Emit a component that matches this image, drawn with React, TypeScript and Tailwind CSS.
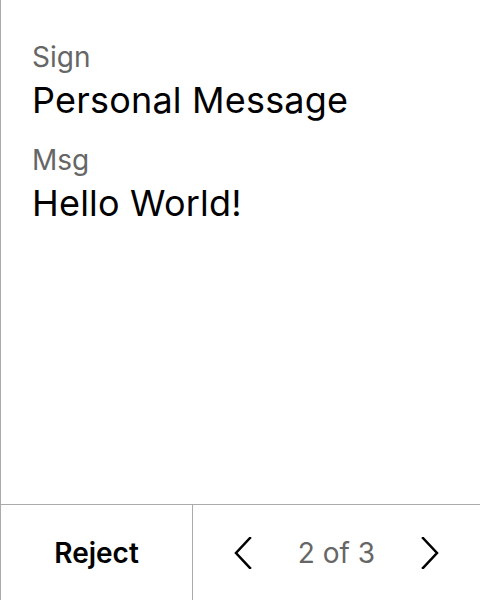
const Field = ({ label, value }: { label: string; value: string }) => (
  <div className="flex flex-col gap-[4px]">
    <span className="text-[28px] leading-[34px] text-[#666666]">{label}</span>
    <span className="text-[36px] leading-[44px] tracking-[0.2px] text-black">{value}</span>
  </div>
);

const App = () => {
  return (
    <section
      className="w-[480px] h-[600px] flex flex-col bg-white border-l border-[#aaaaaa]"
      style={{ fontFamily: 'Inter, "Noto Sans", sans-serif' }}
    >
      <div className="flex-grow flex flex-col gap-[21px] pt-[40px] pl-[31px]">
        <Field label="Sign" value="Personal Message" />
        <Field label="Msg" value="Hello World!" />
      </div>
      <footer className="h-[96px] flex border-t border-[#aaaaaa]">
        <button className="w-[192px] flex items-center justify-center border-r border-[#aaaaaa] text-[28px] font-semibold text-black">
          Reject
        </button>
        <div className="flex-grow flex items-center justify-between px-[34px]">
          <svg width="32" height="32" viewBox="0 0 32 32" fill="none" stroke="black" strokeWidth="2.5" strokeLinecap="square">
            <path d="M23 1 L9 16 L23 31" />
          </svg>
          <span className="text-[28px] text-[#666666]">2 of 3</span>
          <svg width="32" height="32" viewBox="0 0 32 32" fill="none" stroke="black" strokeWidth="2.5" strokeLinecap="square">
            <path d="M9 1 L23 16 L9 31" />
          </svg>
        </div>
      </footer>
    </section>
  );
};

export default App;
